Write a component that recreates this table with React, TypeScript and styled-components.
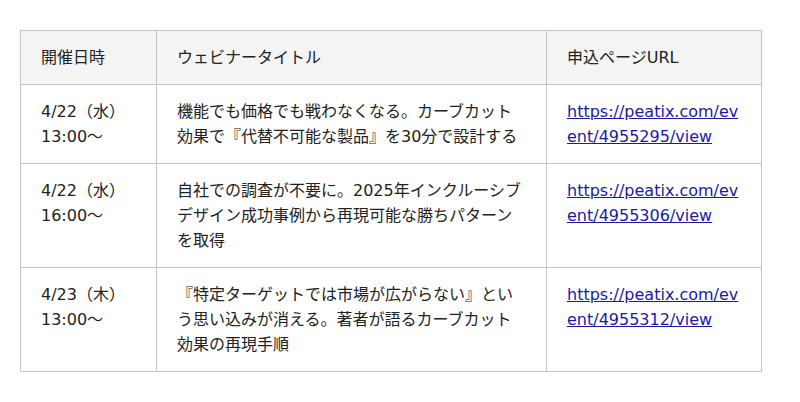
import React from 'react';
import styled, { createGlobalStyle } from 'styled-components';

const GlobalStyle = createGlobalStyle`
  html, body {
    margin: 0;
    padding: 0;
    background: #fff;
  }
  body {
    font-family: 'DejaVu Sans', 'Noto Sans CJK JP', sans-serif;
    color: #222;
  }
`;

type Webinar = {
  date: string;
  time: string;
  title: string;
  url: string;
};

const webinars: Webinar[] = [
  {
    date: '4/22（水）',
    time: '13:00～',
    title: '機能でも価格でも戦わなくなる。カーブカット効果で『代替不可能な製品』を30分で設計する',
    url: 'https://peatix.com/event/4955295/view',
  },
  {
    date: '4/22（水）',
    time: '16:00～',
    title: '自社での調査が不要に。2025年インクルーシブデザイン成功事例から再現可能な勝ちパターンを取得',
    url: 'https://peatix.com/event/4955306/view',
  },
  {
    date: '4/23（木）',
    time: '13:00～',
    title: '『特定ターゲットでは市場が広がらない』という思い込みが消える。著者が語るカーブカット効果の再現手順',
    url: 'https://peatix.com/event/4955312/view',
  },
];

export default function App() {
  return (
    <>
      <GlobalStyle />
      <Styled.Page>
        <Styled.Table>
          <colgroup>
            <col style={{ width: 136 }} />
            <col style={{ width: 390 }} />
            <col style={{ width: 215 }} />
          </colgroup>
          <thead>
            <tr>
              <Styled.Head>開催日時</Styled.Head>
              <Styled.Head>ウェビナータイトル</Styled.Head>
              <Styled.Head>申込ページURL</Styled.Head>
            </tr>
          </thead>
          <tbody>
            {webinars.map((w) => (
              <tr key={w.url}>
                <Styled.Cell>
                  {w.date}
                  <br />
                  {w.time}
                </Styled.Cell>
                <Styled.Cell>{w.title}</Styled.Cell>
                <Styled.Cell>
                  <Styled.Link href={w.url}>{w.url}</Styled.Link>
                </Styled.Cell>
              </tr>
            ))}
          </tbody>
        </Styled.Table>
      </Styled.Page>
    </>
  );
}

const Styled = {
  Page: styled.div`
    padding: 30px 0 0 20px;
  `,
  Table: styled.table`
    width: 741px;
    table-layout: fixed;
    border-collapse: collapse;
    border: 1px solid #dcdcdc;
    font-size: 16px;
    line-height: 25px;
  `,
  Head: styled.th`
    padding: 14px 20px;
    background: #f4f4f4;
    border: 1px solid #c4c4c4;
    text-align: left;
    font-weight: 400;
    vertical-align: middle;
  `,
  Cell: styled.td`
    padding: 14px 20px;
    border: 1px solid #c4c4c4;
    vertical-align: top;
    word-break: break-all;
  `,
  Link: styled.a`
    color: #1a1aa6;
    text-decoration: underline;
    word-break: break-all;
  `,
};
